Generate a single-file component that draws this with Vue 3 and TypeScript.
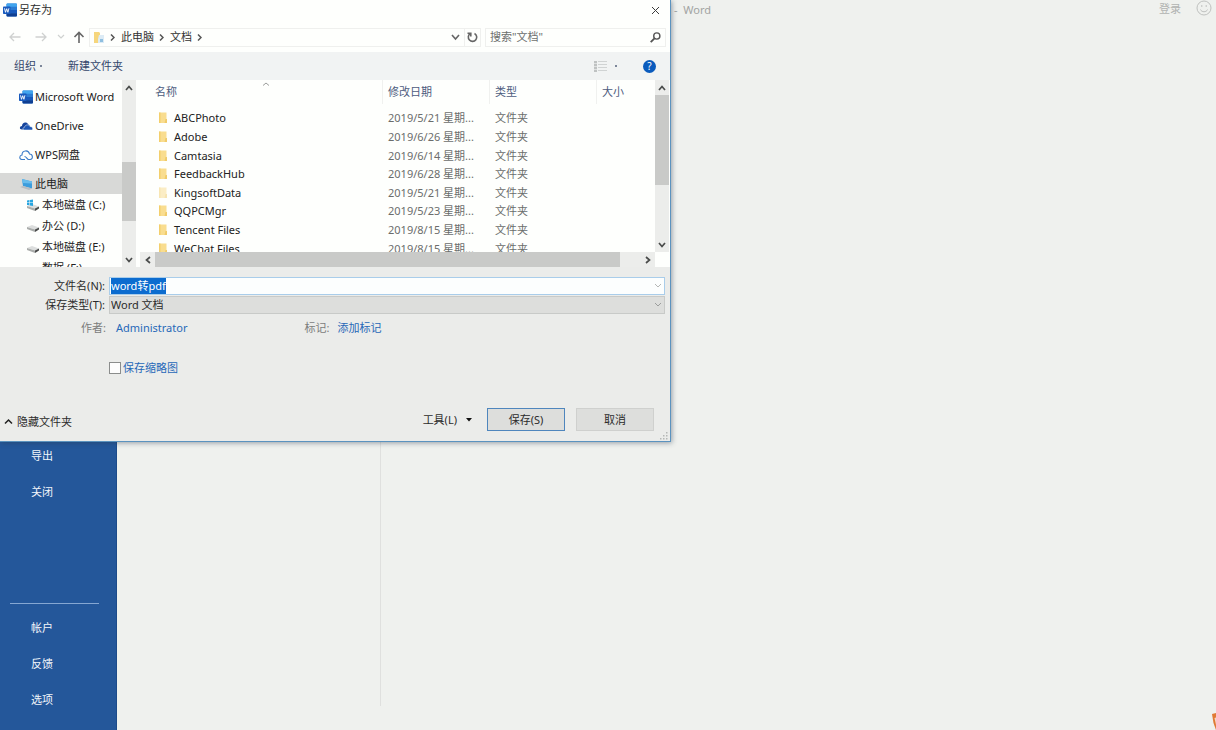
<script setup lang="ts">
import { onMounted, ref } from 'vue'

interface FolderRow {
  name: string
  date: string
  pale?: boolean
}

const folders: FolderRow[] = [
  { name: 'ABCPhoto', date: '2019/5/21 星期...' },
  { name: 'Adobe', date: '2019/6/26 星期...' },
  { name: 'Camtasia', date: '2019/6/14 星期...' },
  { name: 'FeedbackHub', date: '2019/6/28 星期...' },
  { name: 'KingsoftData', date: '2019/5/21 星期...', pale: true },
  { name: 'QQPCMgr', date: '2019/5/23 星期...' },
  { name: 'Tencent Files', date: '2019/8/15 星期...' },
  { name: 'WeChat Files', date: '2019/8/15 星期...' },
]

const drives: { label: string; system?: boolean }[] = [
  { label: '本地磁盘 (C:)', system: true },
  { label: '办公 (D:)' },
  { label: '本地磁盘 (E:)' },
  { label: '数据 (F:)' },
]

const fileName = ref('word转pdf')
const fileType = ref('Word 文档')
const thumbnail = ref(false)
const search = ref('')
const nameInput = ref<HTMLInputElement | null>(null)

onMounted(() => {
  nameInput.value?.focus()
  nameInput.value?.select()
})
</script>

<template>
  <div class="word">
    <nav class="backstage">
      <div class="group">
        <button type="button">导出</button>
        <button type="button">关闭</button>
      </div>
      <div class="group lower">
        <button type="button">帐户</button>
        <button type="button">反馈</button>
        <button type="button">选项</button>
      </div>
    </nav>
    <main class="stage">
      <header class="titlebar">
        <span class="doc-title">-&nbsp; Word</span>
        <button type="button" class="login">登录</button>
        <svg class="smile" width="16" height="16" viewBox="0 0 16 16" fill="none" stroke="#bfc1bf">
          <circle cx="8" cy="8" r="7" />
          <path d="M4.500 9.500c1 3 6 3 7 0M5.800 5v2M10.200 5v2" />
        </svg>
      </header>
      <div class="places"></div>
    </main>

    <svg class="corner-mark" width="4" height="17" viewBox="0 0 4 17">
      <path d="M0 1l4-1v17L1.500 10z" fill="#e07a35" />
      <path d="M2.500 5L4 4.500V12z" fill="#f6d9c3" />
    </svg>

    <section class="dialog" role="dialog" aria-labelledby="dlg-title">
      <header class="caption">
        <svg width="14" height="14" viewBox="0 0 14 14">
          <rect x="3.500" y="0.500" width="10.500" height="13" rx="1" fill="#2b7cd3" />
          <path d="M3.500 1.500a1 1 0 0 1 1-1H13a1 1 0 0 1 1 1v2.300H3.500z" fill="#41a5ee" />
          <path d="M3.500 7H14v3.200H3.500z" fill="#185abd" />
          <path d="M3.500 10.200H14v2.300a1 1 0 0 1-1 1H4.500a1 1 0 0 1-1-1z" fill="#103f91" />
          <rect y="3.500" width="7.500" height="7.500" rx="0.800" fill="#185abd" />
          <path d="M1.500 5.300l1 4 1.200-3.600 1.200 3.600 1-4" fill="none" stroke="#fff" stroke-width="0.900" />
        </svg>
        <h1 id="dlg-title">另存为</h1>
        <button type="button" class="close" aria-label="关闭">
          <svg width="9" height="9" viewBox="0 0 9 9" stroke="#3c3c3c"><path d="M1 1l7 7M8 1L1 8" /></svg>
        </button>
      </header>

      <div class="address">
        <button type="button" class="back" aria-label="后退">
          <svg width="12" height="10" viewBox="0 0 12 10" fill="none" stroke="#cfd1d0" stroke-width="1.300"><path d="M11.500 5H1M5 1L1 5l4 4" /></svg>
        </button>
        <button type="button" class="forward" aria-label="前进">
          <svg width="12" height="10" viewBox="0 0 12 10" fill="none" stroke="#cfd1d0" stroke-width="1.300"><path d="M0.500 5H11M7 1l4 4-4 4" /></svg>
        </button>
        <button type="button" class="recent" aria-label="最近">
          <svg width="8" height="6" viewBox="0 0 8 6" fill="none" stroke="#cfd1d0" stroke-width="1.200"><path d="M1 1l3 3 3-3" /></svg>
        </button>
        <button type="button" class="up" aria-label="向上">
          <svg width="12" height="12" viewBox="0 0 12 12" fill="none" stroke="#666" stroke-width="1.600"><path d="M6 12V1.500M1.500 6L6 1.500 10.500 6" /></svg>
        </button>
        <div class="path">
          <svg width="12" height="13" viewBox="0 0 12 13">
            <path d="M1 1h5l1 1v10H1z" fill="#f6d67d" />
            <path d="M6 4h5v8H5V8z" fill="#dcebf5" />
            <path d="M7 8h3v3H7z" fill="#8fbfe0" />
          </svg>
          <svg class="sep" width="5" height="7" viewBox="0 0 5 7" fill="none" stroke="#555" stroke-width="1.500"><path d="M1 0.500l3 3-3 3" /></svg>
          <a href="#">此电脑</a>
          <svg class="sep" width="5" height="7" viewBox="0 0 5 7" fill="none" stroke="#555" stroke-width="1.500"><path d="M1 0.500l3 3-3 3" /></svg>
          <a href="#">文档</a>
          <svg class="sep" width="5" height="7" viewBox="0 0 5 7" fill="none" stroke="#555" stroke-width="1.500"><path d="M1 0.500l3 3-3 3" /></svg>
          <button type="button" class="history" aria-label="历史记录">
            <svg width="9" height="7" viewBox="0 0 9 7" fill="none" stroke="#666" stroke-width="1.600"><path d="M1 1l3.500 4L8 1" /></svg>
          </button>
        </div>
        <button type="button" class="refresh" aria-label="刷新">
          <svg width="11" height="11" viewBox="0 0 11 11" fill="none" stroke="#666" stroke-width="1.600">
            <path d="M7.500 1.500a4.200 4.200 0 1 1-4.300.2" /><path d="M0.500 1.200h3.300v3.300" />
          </svg>
        </button>
        <div class="search">
          <input v-model="search" type="text" placeholder="搜索&quot;文档&quot;" aria-label="搜索" />
          <svg width="11" height="11" viewBox="0 0 11 11" fill="none" stroke="#555"><circle cx="6.800" cy="4" r="3.100" stroke-width="1.400" /><path d="M4.500 6.300L0.700 10.200" stroke-width="1.800" /></svg>
        </div>
      </div>

      <div class="toolbar">
        <button type="button" class="organize">组织<i></i></button>
        <button type="button">新建文件夹</button>
        <button type="button" class="view" aria-label="视图">
          <svg width="13" height="11" viewBox="0 0 13 11">
            <path d="M0 0h3v11H0z" fill="#bfc2c2" />
            <path d="M0 2.500h3M0 5.500h3M0 8.500h3" stroke="#dfe1e1" />
            <path d="M4 0.500h9M4 3.500h9M4 6.500h9M4 9.500h9" stroke="#d0d3d3" />
          </svg>
          <i></i>
        </button>
        <button type="button" class="help" aria-label="帮助">?</button>
      </div>

      <div class="browser">
        <div class="tree">
          <ul>
            <li>
              <svg width="14" height="14" viewBox="0 0 14 14">
                <rect x="3.500" y="0.500" width="10.500" height="13" rx="1" fill="#2b7cd3" />
                <path d="M3.500 1.500a1 1 0 0 1 1-1H13a1 1 0 0 1 1 1v2.300H3.500z" fill="#41a5ee" />
                <path d="M3.500 7H14v3.200H3.500z" fill="#185abd" />
                <path d="M3.500 10.200H14v2.300a1 1 0 0 1-1 1H4.500a1 1 0 0 1-1-1z" fill="#103f91" />
                <rect y="3.500" width="7.500" height="7.500" rx="0.800" fill="#185abd" />
                <path d="M1.500 5.300l1 4 1.200-3.600 1.200 3.600 1-4" fill="none" stroke="#fff" stroke-width="0.900" />
              </svg>
              <span>Microsoft Word</span>
            </li>
            <li>
              <svg width="14" height="14" viewBox="0 0 14 14">
                <path d="M3 10.500C0 10.500 0.500 7 3 7c0-3.500 4-4.500 6-2L11 7 6 10.500z" fill="#16449c" />
                <path d="M5 11C3.500 11 3.500 8.500 5.500 8.300 6 5.500 10 5 11 7.500c3 0 3.500 3.500 1.500 3.500z" fill="#1c56b4" stroke="#fefffd" stroke-width="0.500" />
              </svg>
              <span>OneDrive</span>
            </li>
            <li>
              <svg width="14" height="14" viewBox="0 0 14 14" fill="none" stroke="#3a7bc8" stroke-width="1.100">
                <path d="M6 11.500H3.500C0 11.500 0 7.500 3 7c0-5 6.500-5.500 7.500-1 3.500 0 4 5.500 0.500 5.500H9.500C8 11.500 7.500 8.500 5.500 8.500" />
              </svg>
              <span>WPS网盘</span>
            </li>
            <li class="active">
              <svg width="14" height="14" viewBox="0 0 14 14">
                <path d="M3 2l10 2.500v7L4 9z" fill="#3b9ddd" />
                <path d="M3 2l10 2.500v2L3.500 6z" fill="#68bcec" />
                <path d="M1 10L4 9l9 2.500-3 1.500z" fill="#b7bdc2" />
              </svg>
              <span>此电脑</span>
            </li>
          </ul>
          <ul class="drives">
            <li v-for="d in drives" :key="d.label">
              <svg width="14" height="14" viewBox="0 0 14 14">
                <path d="M1 8l5-2 7 2.500-4 2z" fill="#dcdedd" />
                <path d="M1 8l8 2.500v2.500L1 10z" fill="#aaadab" />
                <path d="M9 10.500l4-2v2L9 13z" fill="#4a4c4b" />
                <path v-if="d.system" d="M1 2.500l2.500-.5v2.500H1zM4 2l3-.5v3H4zM1 5h2.500v2.300L1 7zM4 5h3v3l-3-.5z" fill="#27a5e0" />
              </svg>
              <span>{{ d.label }}</span>
            </li>
          </ul>
        </div>
        <div class="vscroll tree-scroll">
          <button type="button" aria-label="向上滚动"><svg width="8" height="6" viewBox="0 0 8 6"><path d="M1 5l3-3.500L7 5" /></svg></button>
          <div class="thumb"></div>
          <button type="button" aria-label="向下滚动"><svg width="8" height="6" viewBox="0 0 8 6"><path d="M1 1l3 3.500L7 1" /></svg></button>
        </div>

        <div class="files">
          <div class="table-clip">
            <svg class="sort" width="8" height="4" viewBox="0 0 8 4" fill="none" stroke="#9a9c9b"><path d="M1 3.500l3-2.500 3 2.500" /></svg>
            <table>
              <thead>
                <tr>
                  <th class="c-name"><span>名称</span></th>
                  <th class="c-date"><span>修改日期</span></th>
                  <th class="c-type"><span>类型</span></th>
                  <th><span>大小</span></th>
                </tr>
              </thead>
              <tbody>
                <tr v-for="f in folders" :key="f.name">
                  <td class="name">
                    <div>
                      <svg width="10" height="12" viewBox="0 0 10 12" :class="{ pale: f.pale }">
                        <path d="M1 0.500h7.500V11H1z" fill="#f9dd8f" />
                        <path d="M1 0.500h1.500V11H1z" fill="#f3cf6c" />
                        <path d="M7.500 7h1.500v4H6.500z" fill="#f0cb6a" />
                      </svg>
                      {{ f.name }}
                    </div>
                  </td>
                  <td>{{ f.date }}</td>
                  <td>文件夹</td>
                  <td></td>
                </tr>
              </tbody>
            </table>
          </div>
          <div class="hscroll">
            <button type="button" aria-label="向左滚动"><svg width="6" height="8" viewBox="0 0 6 8"><path d="M5 1L1.500 4 5 7" /></svg></button>
            <div class="thumb"></div>
            <button type="button" aria-label="向右滚动"><svg width="6" height="8" viewBox="0 0 6 8"><path d="M1 1l3.500 3L1 7" /></svg></button>
          </div>
        </div>
        <div class="vscroll file-scroll">
          <button type="button" aria-label="向上滚动"><svg width="8" height="6" viewBox="0 0 8 6"><path d="M1 5l3-3.500L7 5" /></svg></button>
          <div class="thumb"></div>
          <button type="button" aria-label="向下滚动"><svg width="8" height="6" viewBox="0 0 8 6"><path d="M1 1l3 3.500L7 1" /></svg></button>
        </div>
      </div>

      <form class="form" @submit.prevent>
        <div class="field">
          <label for="fname">文件名(N):</label>
          <div class="combo">
            <input id="fname" ref="nameInput" v-model="fileName" type="text" spellcheck="false" />
            <svg width="8" height="6" viewBox="0 0 8 6" fill="none" stroke="#b5b7b6"><path d="M1 1l3 3 3-3" /></svg>
          </div>
        </div>
        <div class="field">
          <label for="ftype">保存类型(T):</label>
          <div class="combo grey">
            <select id="ftype" v-model="fileType"><option>Word 文档</option></select>
            <svg width="8" height="6" viewBox="0 0 8 6" fill="none" stroke="#9c9e9d"><path d="M1 1l3 3 3-3" /></svg>
          </div>
        </div>
        <div class="meta">
          <span class="author">作者:</span><a href="#">Administrator</a>
          <span class="tag">标记:</span><a href="#">添加标记</a>
        </div>
        <div class="thumb-row">
          <input id="thumbnail" v-model="thumbnail" type="checkbox" />
          <label for="thumbnail">保存缩略图</label>
        </div>
        <div class="actions">
          <button type="button" class="plain hide">
            <svg width="9" height="7" viewBox="0 0 9 7" fill="none" stroke="#222" stroke-width="1.500"><path d="M1 5.500l3.500-3.500L8 5.500" /></svg>
            隐藏文件夹
          </button>
          <button type="button" class="plain tools">
            工具(L)
            <svg width="6" height="4" viewBox="0 0 6 4"><path d="M0 0h6L3 3.500z" fill="#111" /></svg>
          </button>
          <button type="submit" class="push primary">保存(S)</button>
          <button type="button" class="push">取消</button>
        </div>
      </form>
      <svg class="grip" width="8" height="8" viewBox="0 0 8 8" fill="#b5b7b6">
        <path d="M6 0h1.500v1.500H6zM3 3h1.500v1.500H3zM6 3h1.500v1.500H6zM0 6h1.500v1.500H0zM3 6h1.500v1.500H3zM6 6h1.500v1.500H6z" />
      </svg>
    </section>
  </div>
</template>

<style>
body {
  background: #eff1ee;
}
</style>

<style scoped>
.word,
.word * {
  box-sizing: border-box;
}
.word {
  position: relative;
  display: flex;
  min-height: 100vh;
  overflow: hidden;
  background: #eff1ee;
  font-family: "Noto Sans", "Noto Sans CJK SC", sans-serif;
  font-size: 11px;
  line-height: 16px;
  color: #2b2b2b;
}
button,
input,
select {
  margin: 0;
  padding: 0;
  border: 0;
  background: none;
  color: inherit;
  font: inherit;
  outline: none;
}
svg {
  display: block;
  flex: none;
}
a {
  text-decoration: none;
}
ul {
  margin: 0;
  padding: 0;
  list-style: none;
}

/* Backstage menu */
.backstage {
  display: flex;
  flex-direction: column;
  justify-content: space-between;
  flex: none;
  width: 117px;
  padding: 438px 0 12px;
  background: #24579a;
  border-right: 1px solid #1c4b8a;
}
.group {
  display: flex;
  flex-direction: column;
}
.group button {
  height: 36px;
  padding-left: 31px;
  text-align: left;
  color: #f2f6fb;
}
.lower::before {
  content: "";
  height: 1px;
  margin: 0 17px 6px 10px;
  background: #86a7d2;
}
.stage {
  display: flex;
  flex-direction: column;
  flex: 1;
  padding-bottom: 24px;
}
.titlebar {
  display: flex;
  align-items: flex-start;
  height: 24px;
  padding-left: 557px;
  color: #a2a4a2;
}
.doc-title {
  padding-top: 2px;
}
.login {
  margin-left: auto;
  padding-top: 1px;
  color: #b1b3b1;
}
.smile {
  margin: 0 4px 0 15px;
}
.places {
  flex: 1;
  width: 264px;
  border-right: 1px solid #dfe0de;
}
.corner-mark {
  position: absolute;
  right: 0;
  bottom: 0;
}

/* Dialog window */
.dialog {
  position: absolute;
  top: 0;
  left: 0;
  width: calc(100% - 545px);
  min-width: 560px;
  background: #ebecea;
  border: solid #5b93bf;
  border-width: 0 1px 1px 0;
  box-shadow: 1px 1px 5px rgba(40, 60, 80, 0.45);
}
.caption {
  display: flex;
  align-items: center;
  height: 20px;
  padding: 0 10px 0 3px;
  background: #fefffd;
}
.caption h1 {
  margin: 0 0 0 2px;
  font-size: 11px;
  font-weight: 400;
}
.close {
  margin-left: auto;
}
.address {
  display: flex;
  align-items: center;
  height: 32px;
  padding: 2px 4px 0 9px;
  background: #fefffd;
}
.forward {
  margin-left: 14px;
}
.recent {
  margin-left: 10px;
}
.up {
  margin-left: 8px;
}
.path {
  display: flex;
  align-items: center;
  flex: 1;
  height: 19px;
  margin-left: 4px;
  padding: 0 4px 0 3px;
  border: 1px solid #eff0ee;
}
.path a {
  color: #333;
}
.sep {
  margin: 0 6px 0 5px;
}
.history {
  margin-left: auto;
}
.refresh {
  display: flex;
  align-items: center;
  justify-content: center;
  width: 16px;
  height: 19px;
  border: 1px solid #eff0ee;
  border-left: 0;
}
.search {
  display: flex;
  align-items: center;
  width: 181px;
  height: 19px;
  margin-left: 4px;
  padding: 0 4px;
  border: 1px solid #eff0ee;
}
.search input {
  flex: 1;
  min-width: 0;
}
.search input::placeholder {
  color: #6d6f6e;
  opacity: 1;
}
.toolbar {
  display: flex;
  align-items: center;
  height: 28px;
  padding: 0 14px;
  background: #f1f3f3;
  color: #34466b;
}
.toolbar i {
  display: inline-block;
  width: 2px;
  height: 2px;
  background: #7c8699;
}
.organize {
  display: flex;
  align-items: center;
  gap: 4px;
  margin-right: 26px;
}
.view {
  display: flex;
  align-items: center;
  gap: 8px;
  margin-left: auto;
}
.help {
  width: 13px;
  height: 13px;
  margin-left: 26px;
  border-radius: 50%;
  background: #0a5bbd;
  color: #fff;
  font-size: 10px;
  line-height: 13px;
  text-align: center;
}

.browser {
  display: flex;
  height: 187px;
  padding-right: 1px;
  background: #fefffd;
}
.tree {
  width: 122px;
  overflow: hidden;
  padding-top: 6px;
  flex: none;
}
.tree ul {
  display: flex;
  flex-direction: column;
  gap: 8px;
}
.tree li {
  display: flex;
  align-items: center;
  flex: none;
  gap: 2px;
  height: 21px;
  padding-left: 19px;
  white-space: nowrap;
  color: #222;
}
.tree .active {
  background: #d8d9d7;
}
.tree .drives {
  gap: 0;
}
.tree .drives li {
  padding-left: 26px;
}
.vscroll {
  display: flex;
  flex-direction: column;
  flex: none;
  width: 14px;
  background: #ecedeb;
}
.vscroll button,
.hscroll button {
  display: flex;
  align-items: center;
  justify-content: center;
  flex: none;
}
.vscroll button {
  height: 15px;
}
.vscroll path,
.hscroll path {
  fill: none;
  stroke: #4a4c4b;
  stroke-width: 1.7;
}
.thumb {
  background: #c9cac8;
}
.tree-scroll .thumb {
  height: 59px;
  margin: 67px 0 auto;
}
.file-scroll {
  height: 172px;
}
.file-scroll .thumb {
  height: 90px;
  margin-bottom: auto;
}
.files {
  display: flex;
  flex-direction: column;
  flex: 1;
  min-width: 0;
  margin-left: 4px;
}
.table-clip {
  position: relative;
  height: 172px;
  overflow: hidden;
}
.sort {
  position: absolute;
  left: 122px;
  top: 2px;
}
table {
  width: 100%;
  height: 178px;
  border-collapse: collapse;
  table-layout: fixed;
}
th {
  height: 29px;
  padding: 0;
  vertical-align: top;
  text-align: left;
  font-weight: 400;
  color: #4d5c7d;
}
th span {
  display: block;
  padding-left: 5px;
  border-left: 1px solid #f0f1ef;
  line-height: 24px;
}
.c-name {
  width: 242px;
}
.c-name span {
  padding-left: 14px;
  border-color: transparent;
}
.c-date,
.c-type {
  width: 107px;
}
td {
  padding: 0 0 0 6px;
  white-space: nowrap;
  color: #6b6d6c;
}
.name {
  padding-left: 18px;
  color: #222;
}
.name div {
  display: flex;
  align-items: center;
  gap: 6px;
}
.pale {
  opacity: 0.5;
}
.hscroll {
  display: flex;
  height: 15px;
  background: #ecedeb;
}
.hscroll button {
  width: 15px;
}
.hscroll .thumb {
  flex: 1;
  margin-right: 20px;
}

/* File name, type and actions */
.form {
  padding: 10px 5px 10px 0;
}
.field {
  display: flex;
  align-items: center;
  margin-bottom: 1px;
}
.field label {
  width: 105px;
  margin-right: 4px;
  text-align: right;
}
.combo {
  position: relative;
  display: flex;
  flex: 1;
  height: 18px;
  border: 1px solid #a9cdea;
  background: #fcfefe;
}
.combo.grey {
  border-color: #c8cac8;
  background: #dddedc;
}
.combo input,
.combo select {
  flex: 1;
  min-width: 0;
  padding-left: 1px;
  appearance: none;
  line-height: 16px;
}
.combo input::selection {
  background: #0c6ccf;
  color: #fff;
}
.combo svg {
  position: absolute;
  right: 2px;
  top: 5px;
  pointer-events: none;
}
.meta {
  display: flex;
  margin-top: 6px;
  color: #7b7d7c;
}
.meta a,
.thumb-row label {
  color: #2768b8;
}
.author {
  width: 106px;
  margin-right: 10px;
  text-align: right;
}
.tag {
  margin: 0 8px 0 117px;
}
.thumb-row {
  display: flex;
  align-items: center;
  gap: 2px;
  margin-top: 24px;
  padding-left: 109px;
}
.thumb-row input {
  width: 12px;
  height: 12px;
  border: 1px solid #8b8d8c;
  background: #fdfdfd;
  appearance: none;
}
.thumb-row input:checked {
  background: #2768b8;
}
.actions {
  display: flex;
  align-items: center;
  margin-top: 32px;
  padding: 0 11px 0 4px;
}
.plain {
  display: flex;
  align-items: center;
}
.hide {
  gap: 4px;
  padding-top: 4px;
}
.tools {
  gap: 9px;
  margin: 0 4px 0 auto;
}
.push {
  width: 78px;
  height: 23px;
  margin-left: 11px;
  border: 1px solid #cfd0ce;
  background: #dddedc;
}
.primary {
  border-color: #4f86bd;
}
.grip {
  position: absolute;
  right: 2px;
  bottom: 1px;
}
</style>
